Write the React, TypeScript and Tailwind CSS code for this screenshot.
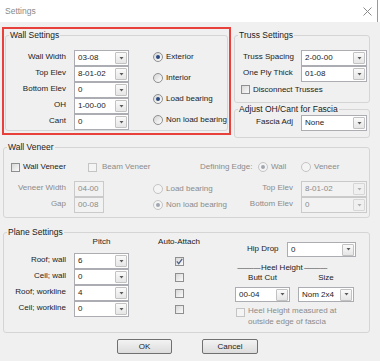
import React from "react";

const ink = "text-[#1b1b1b]";
const dim = "text-[#8b8b8b]";

function Arrow({ disabled }: { disabled?: boolean }) {
  return (
    <svg width="5" height="3" viewBox="0 0 5 3">
      <path d="M0.5 0h4L2.5 2.5z" fill={disabled ? "#b0b0b0" : "#5a5a5a"} />
    </svg>
  );
}

function Combo({
  value,
  className,
  disabled,
}: {
  value: string;
  className: string;
  disabled?: boolean;
}) {
  return (
    <div
      className={`flex items-center border ${
        disabled
          ? "border-[#cacaca] bg-[#f2f2f2] text-[#8b8b8b]"
          : "border-[#abadb3] bg-white text-[#1b1b1b]"
      } ${className}`}
    >
      <span className="flex-1 pl-[3px] leading-none">{value}</span>
      <span
        className={`mr-px flex h-[12px] w-[12px] items-center justify-center rounded-[1px] border ${
          disabled
            ? "border-[#d6d6d6] bg-[#f0f0f0]"
            : "border-[#c2c2c2] bg-linear-to-b from-[#fafafa] to-[#e6e6e6]"
        }`}
      >
        <Arrow disabled={disabled} />
      </span>
    </div>
  );
}

function TextBox({ value }: { value: string }) {
  return (
    <div className="flex h-[16px] w-[30px] items-center border border-[#cacaca] bg-[#f2f2f2] pl-[3px] leading-none text-[#8b8b8b]">
      {value}
    </div>
  );
}

function Check({ checked, disabled }: { checked?: boolean; disabled?: boolean }) {
  return (
    <span
      className={`flex h-[9px] w-[9px] shrink-0 items-center justify-center border ${
        disabled
          ? "border-[#c4c4c4] bg-[#f4f4f4]"
          : "border-[#8e8f8f] bg-linear-to-br from-[#d8d8d8] to-[#fbfbfb]"
      }`}
    >
      {checked && (
        <svg width="7" height="7" viewBox="0 0 7 7">
          <path d="M0.8 3.4l1.9 2.3L6.2 0.8" fill="none" stroke="#4c5f86" strokeWidth="1.2" />
        </svg>
      )}
    </span>
  );
}

function Radio({ checked, disabled }: { checked?: boolean; disabled?: boolean }) {
  return (
    <span
      className={`flex h-[10px] w-[10px] shrink-0 items-center justify-center rounded-full border ${
        disabled
          ? "border-[#c4c4c4] bg-[#f4f4f4]"
          : "border-[#8e8f8f] bg-linear-to-br from-[#d4d4d4] to-white"
      }`}
    >
      {checked && (
        <span
          className={`h-[4px] w-[4px] rounded-full ${disabled ? "bg-[#a0a6b0]" : "bg-[#2a4a80]"}`}
        />
      )}
    </span>
  );
}

function Group({
  title,
  className,
  children,
}: {
  title: string;
  className: string;
  children: React.ReactNode;
}) {
  return (
    <fieldset className={`rounded-[3px] border border-[#d5d5d5] ${className}`}>
      <legend className={`ml-[3px] px-px text-[8.5px] leading-[10px] ${ink}`}>{title}</legend>
      {children}
    </fieldset>
  );
}

export default function App() {
  return (
    <div
      className={`h-[361px] w-[380px] overflow-hidden whitespace-nowrap bg-[#f0f0f0] font-['Liberation_Sans',Arial,sans-serif] text-[8px] ${ink}`}
    >
      {/* title bar */}
      <div className="flex h-[22px] items-center bg-white pl-[5px]">
        <span className="flex-1 text-[8.5px] text-[#8a8a8a]">Settings</span>
        <svg width="9" height="9" viewBox="0 0 9 9">
          <path d="M0.5 0.5l8 8M8.5 0.5l-8 8" stroke="#8a8a8a" strokeWidth="1" />
        </svg>
        <span className="ml-[5px] w-px self-stretch bg-[#9a9a9a]" />
        <span className="w-[2px]" />
      </div>

      <div className="px-[2px] pt-[5px]">
        {/* top row */}
        <div className="flex items-start">
          <div className="h-[108px] w-[229px] border-2 border-[#e8413c]">
            <Group title="Wall Settings" className="ml-px mt-px h-[101px] w-[222px]">
              <div className="flex pt-[6px]">
                <div className="mt-[4px] grid auto-rows-[16px] grid-cols-[60px_55px] gap-x-[8px]">
                  {[
                    ["Wall Width", "03-08"],
                    ["Top Elev", "8-01-02"],
                    ["Bottom Elev", "0"],
                    ["OH", "1-00-00"],
                    ["Cant", "0"],
                  ].map(([l, v]) => (
                    <React.Fragment key={l}>
                      <span className="self-center pb-[2px] text-right leading-none">{l}</span>
                      <Combo value={v} className="h-[16px] w-[55px]" />
                    </React.Fragment>
                  ))}
                </div>
                <div className="ml-[24px] flex flex-col">
                  {[
                    ["Exterior", true],
                    ["Interior", false],
                    ["Load bearing", true],
                    ["Non load bearing", false],
                  ].map(([l, c]) => (
                    <div key={l as string} className="flex h-[21px] items-center gap-[3px]">
                      <Radio checked={c as boolean} />
                      <span>{l as string}</span>
                    </div>
                  ))}
                </div>
              </div>
            </Group>
          </div>

          <div className="ml-[3px] mt-[3px] flex flex-col gap-px">
            <Group title="Truss Settings" className="h-[73px] w-[136px]">
              <div className="pl-[8px] pt-[10px]">
                <div className="flex h-[16px] items-center">
                  <span className="w-[58px] pb-[2px]">Truss Spacing</span>
                  <Combo value="2-00-00" className="h-[16px] w-[66px]" />
                </div>
                <div className="flex h-[16px] items-center">
                  <span className="w-[58px] pb-[2px]">One Ply Thick</span>
                  <Combo value="01-08" className="h-[16px] w-[66px]" />
                </div>
                <div className="-ml-[2px] flex h-[15px] items-center gap-[3px]">
                  <Check />
                  <span>Disconnect Trusses</span>
                </div>
              </div>
            </Group>
            <Group title="Adjust OH/Cant for Fascia" className="h-[34px] w-[136px]">
              <div className="flex items-center justify-end gap-[8px] pr-[2px] pt-px">
                <span className="pb-[2px]">Fascia Adj</span>
                <Combo value="None" className="h-[16px] w-[66px]" />
              </div>
            </Group>
          </div>
        </div>

        {/* wall veneer */}
        <Group title="Wall Veneer" className="ml-px mt-[4px] h-[76px] w-[367px]">
          <div className="mt-[7px] flex h-[16px] items-center">
            <div className="flex w-[84px] items-center gap-[3px] pl-[7px]">
              <Check />
              <span>Wall Veneer</span>
            </div>
            <div className={`flex w-[112px] items-center gap-[5px] ${dim}`}>
              <Check disabled />
              <span>Beam Veneer</span>
            </div>
            <span className={`w-[58px] ${dim}`}>Defining Edge:</span>
            <div className={`flex w-[43px] items-center gap-[3px] ${dim}`}>
              <Radio checked disabled />
              <span>Wall</span>
            </div>
            <div className={`flex items-center gap-[3px] ${dim}`}>
              <Radio disabled />
              <span>Veneer</span>
            </div>
          </div>
          {[
            ["Veneer Width", "04-00", "Load bearing", false, "Top Elev", "8-01-02"],
            ["Gap", "00-08", "Non load bearing", true, "Bottom Elev", "0"],
          ].map(([l, v, r, c, l2, v2], i) => (
            <div key={i} className={`flex h-[16px] items-center ${i === 0 ? "mt-[6px]" : ""} ${dim}`}>
              <span className="w-[62px] pb-[2px] text-right">{l as string}</span>
              <div className="ml-[8px]">
                <TextBox value={v as string} />
              </div>
              <div className="ml-[49px] flex flex-1 items-center gap-[3px]">
                <Radio checked={c as boolean} disabled />
                <span>{r as string}</span>
              </div>
              <span className="pb-[2px] text-right">{l2 as string}</span>
              <Combo value={v2 as string} disabled className="ml-[8px] mr-[2px] h-[16px] w-[66px]" />
            </div>
          ))}
        </Group>

        {/* plane settings */}
        <Group title="Plane Settings" className="ml-px mt-[9px] h-[106px] w-[367px]">
          <div className="flex">
            <div>
              <div className="flex h-[10px] items-center">
                <span className="w-[70px]" />
                <span className="w-[55px] text-center">Pitch</span>
                <span className="ml-[22px] w-[56px] text-center">Auto-Attach</span>
              </div>
              <div className="mt-[6px]">
                {[
                  ["Roof; wall", "6", true],
                  ["Ceil; wall", "0", false],
                  ["Roof; workline", "4", false],
                  ["Ceil; workline", "0", false],
                ].map(([l, v, c]) => (
                  <div key={l as string} className="flex h-[16px] items-center">
                    <span className="w-[62px] pb-[2px] text-right">{l as string}</span>
                    <Combo value={v as string} className="ml-[8px] h-[16px] w-[55px]" />
                    <div className="ml-[22px] flex w-[56px] justify-center">
                      <Check checked={c as boolean} />
                    </div>
                  </div>
                ))}
              </div>
            </div>

            <div className="ml-[28px] flex flex-col">
              <div className="mt-[5px] flex h-[15px] items-center pl-[12px]">
                <span className="w-[40px] pb-[1px]">Hip Drop</span>
                <Combo value="0" className="h-[15px] w-[69px]" />
              </div>
              <div className="mt-[6px] flex h-[10px] items-center pl-[2px]">
                <span className="tracking-[-0.9px] text-[#555]">-------------</span>
                <span className="px-px">Heel Height</span>
                <span className="tracking-[-0.9px] text-[#555]">-------------</span>
              </div>
              <div className="flex">
                <div className="flex w-[55px] flex-col items-center">
                  <span className="h-[10px] leading-[10px]">Butt Cut</span>
                  <Combo value="00-04" className="mt-[4px] h-[15px] w-[55px]" />
                </div>
                <div className="ml-[8px] flex w-[56px] flex-col items-center">
                  <span className="h-[10px] leading-[10px]">Size</span>
                  <Combo value="Nom 2x4" className="mt-[4px] h-[15px] w-[56px]" />
                </div>
              </div>
              <div className={`mt-[4px] flex items-start gap-[3px] pl-px ${dim}`}>
                <span className="mt-[2px]">
                  <Check disabled />
                </span>
                <span className="leading-[10.5px]">
                  Heel Height measured at
                  <br />
                  outside edge of fascia
                </span>
              </div>
            </div>
          </div>
        </Group>

        {/* buttons */}
        <div className="mt-[6px] flex gap-[30px] pl-[115px]">
          <button className="flex h-[15px] w-[55px] items-center justify-center rounded-[2px] border border-[#707070] bg-linear-to-b from-[#f3f3f3] to-[#dcdcdc] leading-none">
            OK
          </button>
          <button className="flex h-[15px] w-[56px] items-center justify-center rounded-[2px] border border-[#707070] bg-linear-to-b from-[#f3f3f3] to-[#dcdcdc] leading-none">
            Cancel
          </button>
        </div>
      </div>
    </div>
  );
}
